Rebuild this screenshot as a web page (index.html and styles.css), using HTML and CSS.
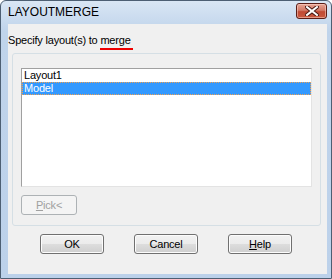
FILE: index.html
```html
<!DOCTYPE html>
<html lang="en">
<head>
  <meta charset="UTF-8" />
  <title>LAYOUTMERGE</title>
  <link rel="stylesheet" href="styles.css">
</head>
<body>
  <!-- Dialog window -->
  <div class="window">
    <div class="titlebar">
      <span class="title">LAYOUTMERGE</span>
      <button class="close-btn" aria-label="Close">
        <svg width="14" height="10" viewBox="0 0 14 10">
          <path d="M2 1 L12 9 M12 1 L2 9" stroke="#4a1a14" stroke-width="4" stroke-linecap="square"/>
          <path d="M2 1 L12 9 M12 1 L2 9" stroke="#ffffff" stroke-width="2" stroke-linecap="square"/>
        </svg>
      </button>
    </div>

    <div class="client">
      <p class="prompt">Specify layout(s) to <span class="mark">merge</span></p>

      <div class="group">
        <ul class="listbox">
          <li>Layout1</li>
          <li class="selected">Model</li>
        </ul>
        <button class="btn pick" disabled><u>P</u>ick&lt;</button>
      </div>

      <div class="actions">
        <button class="btn">OK</button>
        <button class="btn">Cancel</button>
        <button class="btn"><u>H</u>elp</button>
      </div>
    </div>
  </div>
</body>
</html>
```

FILE: styles.css
```css
/* ---------------------------------------
   1. RESET
--------------------------------------- */
* {
  margin: 0;
  padding: 0;
  box-sizing: border-box;
}

body {
  width: 332px;
  height: 279px;
  font-family: "Liberation Sans", Arial, sans-serif;
  font-size: 11px;
  letter-spacing: -0.2px;
  color: #000;
  background: #fff;
}

/* ---------------------------------------
   2. WINDOW FRAME
--------------------------------------- */
.window {
  width: 332px;
  height: 279px;
  border: 1px solid #4d5f73;
  border-radius: 6px 6px 0 0;
  background: linear-gradient(to bottom, #d9e6f4, #c0d4eb 30px, #bcd1ea);
  display: flex;
  flex-direction: column;
  padding: 0 4px 4px 7px;
}

.titlebar {
  height: 23px;
  display: flex;
  align-items: center;
  justify-content: space-between;
}
.title {
  font-size: 12px;
  letter-spacing: 0;
  margin-top: -1px;
}
.close-btn {
  width: 31px;
  height: 16px;
  margin-top: -3px;
  border: 1px solid #5b1e17;
  border-radius: 3px;
  background: linear-gradient(to bottom, #e8a595, #d27a68 45%, #c04a34 55%, #c9593f);
  display: flex;
  align-items: center;
  justify-content: center;
  box-shadow: inset 0 0 0 1px rgba(255, 220, 210, 0.5);
}

/* ---------------------------------------
   3. CLIENT AREA
--------------------------------------- */
.client {
  flex: 1;
  background: #f0f0f0;
  display: flex;
  flex-direction: column;
}

.prompt {
  margin-top: 9px;
  line-height: 14px;
}
.mark {
  border-bottom: 2px solid #ee0000;
  padding: 0 2px 2px 0;
}

.group {
  margin: 6px 6px 0 4px;
  border: 1px solid #d5dfe5;
  border-radius: 3px;
  padding: 14px 8px 10px 8px;
}

.listbox {
  list-style: none;
  height: 119px;
  background: #fff;
  border: 1px solid;
  border-color: #a0a0a0 #e3e3e3 #e3e3e3 #a0a0a0;
}
.listbox li {
  height: 13px;
  line-height: 13px;
  padding-left: 2px;
}
.listbox li.selected {
  background: #3399ff;
  color: #fff;
  outline: 1px dotted #f0a050;
  outline-offset: -1px;
}

/* ---------------------------------------
   4. BUTTONS
--------------------------------------- */
.btn {
  width: 64px;
  height: 20px;
  font-family: inherit;
  font-size: 11px;
  letter-spacing: -0.2px;
  color: #000;
  border: 1px solid #707070;
  border-radius: 3px;
  background: linear-gradient(to bottom, #f2f2f2, #ebebeb 50%, #dddddd 50%, #cfcfcf);
  box-shadow: inset 0 0 0 1px #fcfcfc;
}
.btn.pick {
  width: 56px;
  margin-top: 8px;
  color: #a0a0a0;
  border-color: #adb2b5;
  background: #f4f4f4;
  box-shadow: none;
  display: block;
}

.actions {
  margin-top: 8px;
  display: flex;
  gap: 30px;
  padding-left: 32px;
}
```
